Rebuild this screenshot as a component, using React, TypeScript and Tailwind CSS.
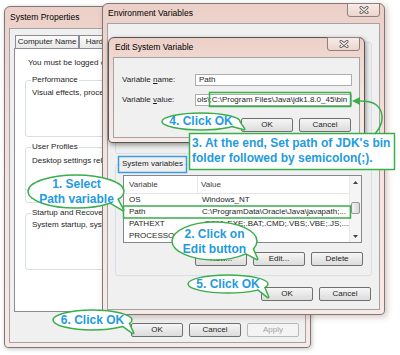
import React from "react";

const G = "#3aae4a";

function Btn({ label, disabled }: { label: string; disabled?: boolean }) {
  return (
    <div
      className={
        disabled
          ? "flex h-[14px] w-[52px] items-center justify-center rounded-[2px] border border-[#b9b9b9] bg-[#f4f4f4] text-[#a3a3a3]"
          : "flex h-[14px] w-[52px] items-center justify-center rounded-[2px] border border-[#707070] bg-gradient-to-b from-[#f6f6f6] to-[#dcdcdc] text-[#1e1e1e]"
      }
    >
      {label}
    </div>
  );
}

function CloseBtn() {
  return (
    <div className="absolute right-[4px] top-[-1px] flex h-[14px] w-[33px] items-center justify-center rounded-b-[3px] border border-[#8d817e] bg-gradient-to-b from-[#f8ece9] to-[#ecd4cd]">
      <svg width="10" height="8" viewBox="0 0 10 8">
        <path d="M2 1.5 L8 6.5 M8 1.5 L2 6.5" stroke="#5a5a5a" strokeWidth="3" strokeLinecap="round" />
        <path d="M2 1.5 L8 6.5 M8 1.5 L2 6.5" stroke="#ffffff" strokeWidth="1.3" strokeLinecap="round" />
      </svg>
    </div>
  );
}

function Win({
  className,
  title,
  titleCls,
  close,
  children,
}: {
  className: string;
  title: string;
  titleCls: string;
  close?: boolean;
  children: React.ReactNode;
}) {
  return (
    <div
      className={
        "absolute flex flex-col rounded-t-[6px] rounded-b-[4px] border bg-gradient-to-b from-[#ecd0c8] via-[#f5e3de] to-[#f7e9e5] " +
        className
      }
    >
      <div className={"flex shrink-0 items-center text-[8.5px] text-black " + titleCls}>{title}</div>
      {close && <CloseBtn />}
      <div className="mx-[4px] mb-[4px] min-h-0 flex-1 overflow-hidden border border-[#a3a3a3] bg-[#f0f0f0]">
        {children}
      </div>
    </div>
  );
}

function Tab({ label, w }: { label: string; w: string }) {
  return (
    <div
      className={
        "flex h-[13px] shrink-0 items-center justify-center border border-b-0 border-[#898c95] bg-gradient-to-b from-[#fbfbfb] to-[#e8e8e8] text-[#1e1e1e] " +
        w
      }
    >
      {label}
    </div>
  );
}

function Bubble({
  cx,
  cy,
  rx,
  ry,
  tail,
}: {
  cx: number;
  cy: number;
  rx: number;
  ry: number;
  tail: string;
}) {
  return (
    <g>
      <polygon points={tail} fill="white" stroke={G} strokeWidth={3} strokeLinejoin="round" />
      <ellipse cx={cx} cy={cy} rx={rx} ry={ry} fill="white" stroke={G} strokeWidth={1.5} />
      <polygon points={tail} fill="white" />
    </g>
  );
}

function SysProps() {
  return (
    <Win
      className="left-[4px] top-[6px] h-[342px] w-[307px] border-[#7a7a7a] shadow-[1px_1px_4px_rgba(0,0,0,0.25)]"
      title="System Properties"
      titleCls="h-[21px] pl-[5px]"
    >
      <div className="ml-[5px] mt-[6px] flex">
        <Tab label="Computer Name" w="w-[64px]" />
        <Tab label="Hardware" w="w-[48px]" />
        <Tab label="Advanced" w="w-[48px]" />
        <Tab label="System Protection" w="w-[74px]" />
        <Tab label="Remote" w="w-[40px]" />
      </div>
      <div className="ml-[4px] mr-[5px] h-[264px] overflow-hidden border border-[#898c95] bg-white text-[#1e1e1e]">
        <div className="mt-[9px] whitespace-nowrap pl-[13px] leading-[10px]">
          You must be logged on as an Administrator to make most of these changes.
        </div>
        <fieldset className="ml-[10px] mr-[8px] mt-[7px] h-[62px] rounded-[3px] border border-[#d5dfe5]">
          <legend className="ml-[5px] px-[1px] leading-[10px]">Performance</legend>
          <div className="mt-[3px] whitespace-nowrap pl-[6px] leading-[10px]">
            Visual effects, processor scheduling, memory usage, and virtual memory
          </div>
        </fieldset>
        <fieldset className="ml-[10px] mr-[8px] mt-[5px] h-[61px] rounded-[3px] border border-[#d5dfe5]">
          <legend className="ml-[5px] px-[1px] leading-[10px]">User Profiles</legend>
          <div className="mt-[4px] whitespace-nowrap pl-[6px] leading-[10px]">
            Desktop settings related to your sign-in
          </div>
        </fieldset>
        <fieldset className="ml-[10px] mr-[8px] mt-[5px] h-[62px] rounded-[3px] border border-[#d5dfe5]">
          <legend className="ml-[5px] px-[1px] leading-[10px]">Startup and Recovery</legend>
          <div className="mt-[2px] whitespace-nowrap pl-[6px] leading-[10px]">
            System startup, system failure, and debugging information
          </div>
        </fieldset>
      </div>
      <div className="mt-[11px] flex justify-end gap-[6px] pr-[6px]">
        <Btn label="OK" />
        <Btn label="Cancel" />
        <Btn label="Apply" disabled />
      </div>
    </Win>
  );
}

function Row({ name, value }: { name: string; value: string }) {
  return (
    <div className="flex h-[12px] items-center whitespace-nowrap text-[#1e1e1e]">
      <div className="w-[74px] shrink-0 overflow-hidden pl-[5px]">{name}</div>
      <div className="overflow-hidden pl-[4px]">{value}</div>
    </div>
  );
}

function Arrow({ up }: { up?: boolean }) {
  return (
    <div className="flex h-[12px] shrink-0 items-center justify-center">
      <svg width="5" height="3" viewBox="0 0 5 3">
        <polygon points={up ? "0,3 5,3 2.5,0" : "0,0 5,0 2.5,3"} fill="#444" />
      </svg>
    </div>
  );
}

function ListView({ rows }: { rows: { name: string; value: string }[] }) {
  return (
    <div className="ml-[7px] flex h-[68px] w-[239px] border border-[#828790] bg-white">
      <div className="min-w-0 flex-1 overflow-hidden">
        <div className="flex h-[18px] items-center border-b border-[#e5e5e5] text-[#3c3c3c]">
          <div className="flex h-full w-[74px] shrink-0 items-center border-r border-[#e5e5e5] pl-[5px]">Variable</div>
          <div className="pl-[3px]">Value</div>
        </div>
        {rows.map((r) => (
          <Row key={r.name} name={r.name} value={r.value} />
        ))}
      </div>
      <div className="flex w-[12px] shrink-0 flex-col border-l border-[#e8e8e8] bg-[#f5f5f5]">
        <Arrow up />
        <div className="flex-1">
          <div className="mx-[1px] mt-[14px] h-[12px] rounded-[2px] border border-[#959595] bg-gradient-to-r from-[#f2f2f2] to-[#d8d8d8]" />
        </div>
        <Arrow />
      </div>
    </div>
  );
}

function EnvVars() {
  return (
    <Win
      className="left-[102px] top-[3px] h-[312px] w-[283px] border-[#7a7a7a] shadow-[2px_2px_6px_rgba(120,60,50,0.3)]"
      title="Environment Variables"
      titleCls="h-[19px] pl-[5px]"
      close
    >
      <fieldset className="mx-[7px] mt-[13px] h-[117px] rounded-[3px] border border-[#d5dfe5] text-[#1e1e1e]">
        <legend className="ml-[5px] px-[1px] leading-[10px]">User variables for user</legend>
        <div className="ml-[7px] mt-[6px] h-[62px] w-[239px] border border-[#828790] bg-white" />
      </fieldset>
      <fieldset className="mx-[7px] mt-[5px] h-[117px] rounded-[3px] border border-[#d5dfe5] text-[#1e1e1e]">
        <legend className="ml-[5px] px-[1px] leading-[10px]">System variables</legend>
        <div className="mt-[6px]">
          <ListView
            rows={[
              { name: "OS", value: "Windows_NT" },
              { name: "Path", value: "C:\\ProgramData\\Oracle\\Java\\javapath;..." },
              { name: "PATHEXT", value: ".COM;.EXE;.BAT;.CMD;.VBS;.VBE;.JS;...." },
              { name: "PROCESSOR", value: "AMD64" },
            ]}
          />
        </div>
        <div className="mt-[9px] flex justify-end gap-[6px] pr-[8px]">
          <Btn label="New..." />
          <Btn label="Edit..." />
          <Btn label="Delete" />
        </div>
      </fieldset>
      <div className="mt-[11px] flex justify-end gap-[6px] pr-[8px]">
        <Btn label="OK" />
        <Btn label="Cancel" />
      </div>
    </Win>
  );
}

function EditVar() {
  return (
    <Win
      className="left-[108px] top-[37px] h-[106px] w-[257px] border-[#555555] shadow-[1px_2px_5px_rgba(0,0,0,0.4)]"
      title="Edit System Variable"
      titleCls="h-[19px] pl-[6px]"
      close
    >
      <div className="mt-[16px] flex h-[12px] items-center text-[#1e1e1e]">
        <div className="w-[81px] shrink-0 pl-[8px]">
          Variable <u>n</u>ame:
        </div>
        <div className="mr-[7px] flex h-[12px] flex-1 items-center border border-[#abadb3] bg-white px-[3px]">Path</div>
      </div>
      <div className="mt-[8px] flex h-[12px] items-center text-[#1e1e1e]">
        <div className="w-[81px] shrink-0 pl-[8px]">
          Variable <u>v</u>alue:
        </div>
        <div className="mr-[7px] flex h-[12px] min-w-0 flex-1 items-center overflow-hidden whitespace-nowrap border border-[#abadb3] bg-white pl-[1px]">
          ols\;C:\Program Files\Java\jdk1.8.0_45\bin
        </div>
      </div>
      <div className="mt-[12px] flex justify-end gap-[6px] pr-[8px]">
        <Btn label="OK" />
        <Btn label="Cancel" />
      </div>
    </Win>
  );
}

function Note({ cls, lines }: { cls: string; lines: string[] }) {
  return (
    <div
      className={
        "absolute flex flex-col items-center justify-center whitespace-nowrap text-[12px] font-bold leading-[15px] text-[#1f9be0] " +
        cls
      }
    >
      {lines.map((l) => (
        <div key={l}>{l}</div>
      ))}
    </div>
  );
}

export default function App() {
  return (
    <div className="relative h-[355px] w-[400px] overflow-hidden bg-white font-['Liberation_Sans',Arial,sans-serif] text-[8px]">
      <SysProps />
      <EnvVars />
      <EditVar />
      <svg className="pointer-events-none absolute inset-0" width="400" height="355" viewBox="0 0 400 355">
        <rect x="209.5" y="92.5" width="141" height="14" fill="none" stroke={G} strokeWidth="1.5" />
        <rect x="123.5" y="206" width="227" height="12" fill="none" stroke={G} strokeWidth="1.5" />
        <rect x="118.5" y="156.5" width="68" height="16" fill="none" stroke="#3d9bd8" strokeWidth="1.5" />
        <rect x="189.5" y="133.5" width="205" height="36" fill="white" stroke={G} strokeWidth="1.5" />
        <path d="M375 134 C387 120 385 100 359 101" fill="none" stroke={G} strokeWidth="1.5" />
        <polygon points="352,101 360,97 360,105" fill={G} />
        <Bubble cx={76} cy={191.5} rx={48} ry={16.5} tail="108,201 116,197 123,210" />
        <Bubble cx={214.5} cy={241} rx={42.5} ry={19} tail="244,252 251,245 257,259" />
        <Bubble cx={201} cy={121.5} rx={39} ry={8.5} tail="233,126 238,120 244,129" />
        <Bubble cx={228} cy={284} rx={40} ry={9} tail="258,289 263,285 268,297" />
        <Bubble cx={92.5} cy={320} rx={39.5} ry={10} tail="122,325 127,320 133,333" />
      </svg>
      <Note cls="left-[28px] top-[175px] h-[33px] w-[97px]" lines={["1. Select", "Path variable"]} />
      <Note cls="left-[172px] top-[222px] h-[40px] w-[85px]" lines={["2. Click on", "Edit button"]} />
      <div className="absolute left-[192px] top-[136px] whitespace-nowrap text-[12px] font-bold leading-[15px] text-[#1f9be0]">
        <div>3. At the end, Set path of JDK's bin</div>
        <div>folder followed by semicolon(;).</div>
      </div>
      <Note cls="left-[162px] top-[113px] h-[17px] w-[78px]" lines={["4. Click OK"]} />
      <Note cls="left-[188px] top-[275px] h-[18px] w-[80px]" lines={["5. Click OK"]} />
      <Note cls="left-[53px] top-[310px] h-[20px] w-[79px]" lines={["6. Click OK"]} />
    </div>
  );
}
